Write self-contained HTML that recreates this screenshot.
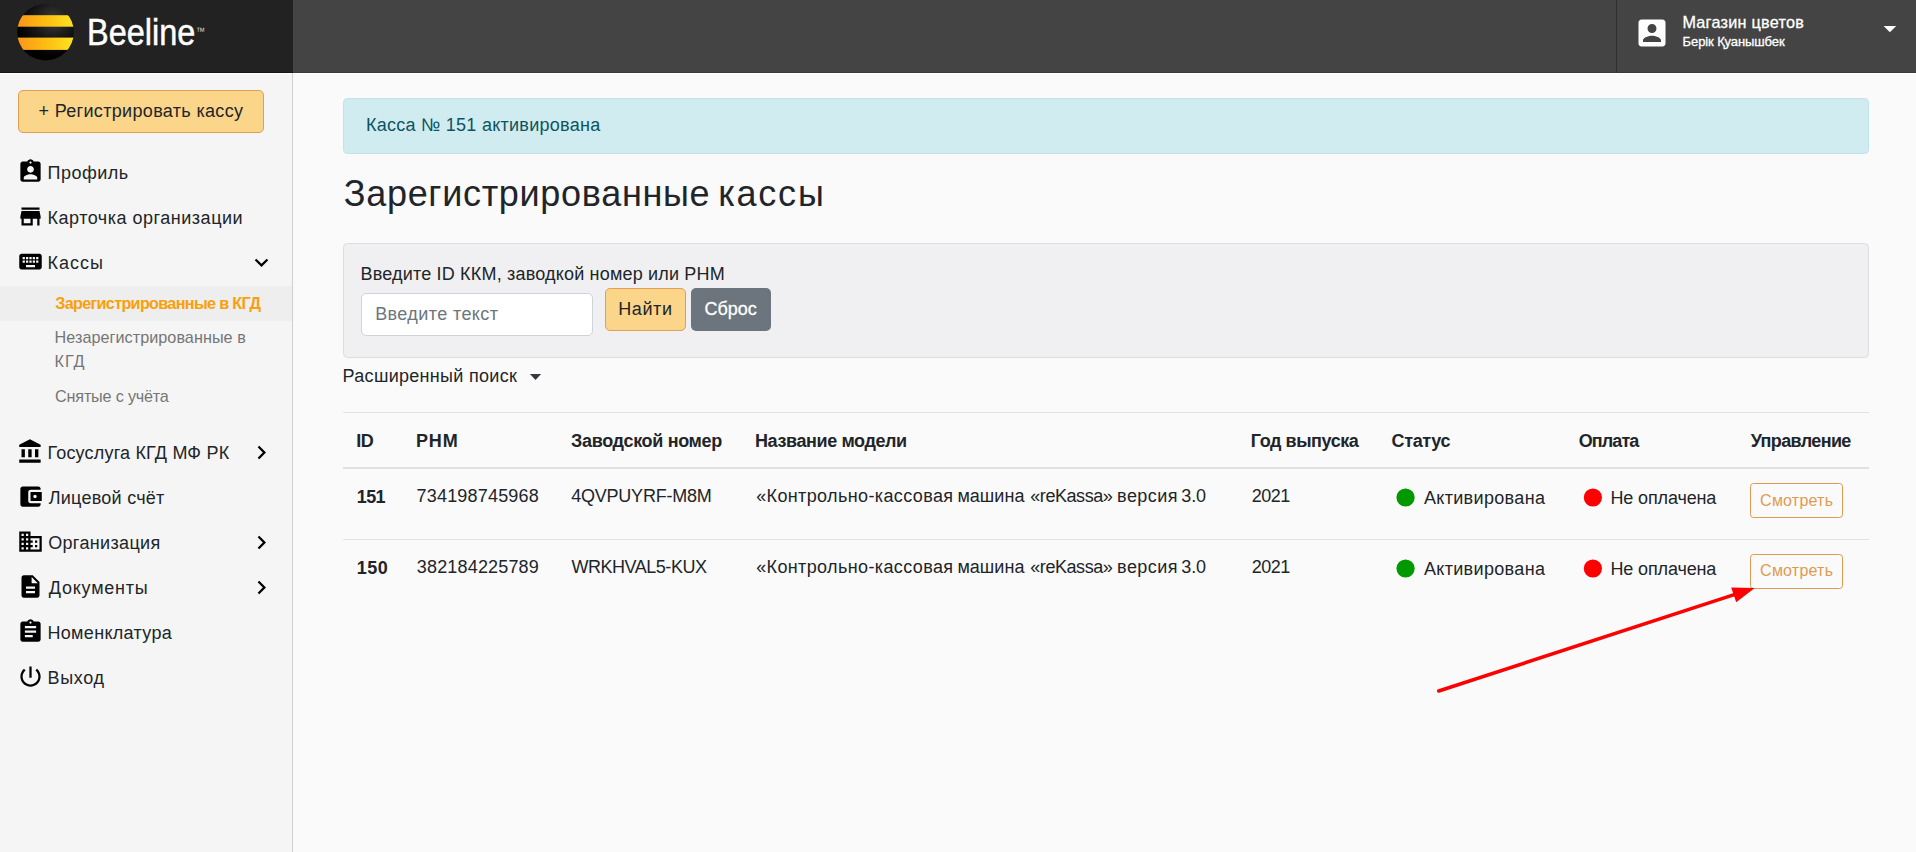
<!DOCTYPE html>
<html lang="ru">
<head>
<meta charset="utf-8">
<title>Зарегистрированные кассы</title>
<style>
html,body{margin:0;padding:0}
body{width:1916px;height:852px;overflow:hidden;position:relative;background:#fafafa;font-family:"Liberation Sans",sans-serif;color:#212529}
header,aside,main,nav,section,ul,li,form,h1,.tbl,.tr{position:absolute;left:0;top:0;margin:0;padding:0;list-style:none;display:block}
.b{position:absolute;box-sizing:border-box}
.t{position:absolute;margin:0;padding:0;line-height:1;font-weight:400;white-space:pre;display:block;text-decoration:none;color:#212529}
svg{position:absolute;overflow:visible}
.ic{width:27px;height:27px;left:17px;fill:#000}
.ch{width:27px;height:27px;left:248px;fill:#000}
.btn-y{background:#fad58a;border:1px solid #e39d54;border-radius:5px}
.btn-o{border:1px solid #df9a52;border-radius:3.5px;left:1750px;width:93px}
.hl{background:#dee2e6;left:343px;width:1526px;height:1px}
</style>
</head>
<body>

<header>
  <div class="b" style="left:0;top:0;width:1916px;height:73px;background:#444444;border-bottom:1px solid #3a3a3a"></div>
  <div class="b" style="left:0;top:0;width:293px;height:73px;background:#222222;border-bottom:1px solid #161616"></div>
  <svg style="left:16px;top:3px;width:60px;height:60px" viewBox="16 3 60 60">
    <defs>
      <clipPath id="lc"><circle cx="45.5" cy="32.2" r="28.3"/></clipPath>
      <linearGradient id="ly" x1="0" y1="0" x2="1" y2="0">
        <stop offset="0" stop-color="#fb9419"/><stop offset="0.5" stop-color="#fdbd12"/><stop offset="1" stop-color="#ffe820"/>
      </linearGradient>
      <radialGradient id="lb" cx="0.62" cy="0.28" r="0.62">
        <stop offset="0" stop-color="#3c3c3c"/><stop offset="0.55" stop-color="#151515"/><stop offset="1" stop-color="#000"/>
      </radialGradient>
    </defs>
    <g clip-path="url(#lc)">
      <rect x="16" y="3" width="60" height="60" fill="url(#lb)"/>
      <rect x="16" y="15.2" width="60" height="11.5" fill="url(#ly)"/>
      <rect x="16" y="37.6" width="60" height="12.3" fill="url(#ly)"/>
    </g>
  </svg>
  <a class="t" style="left:86.63px;top:14px;font-size:37px;font-weight:400;color:#ffffff;transform:scaleX(0.8771);transform-origin:0 0;-webkit-text-stroke:.5px #fff">Beeline</a>
  <span class="t" style="left:196.4px;top:25.5px;font-size:11px;color:#d8d8d8;transform:scaleX(.82);transform-origin:0 0">™</span>
  <div class="b" style="left:1616px;top:0;width:1px;height:73px;background:#2f2f2f"></div>
  <svg style="left:1634px;top:14.6px;width:36px;height:36px;fill:#fff" viewBox="0 0 24 24"><path d="M3 5v14c0 1.1.89 2 2 2h14c1.1 0 2-.9 2-2V5c0-1.1-.9-2-2-2H5c-1.11 0-2 .9-2 2zm12 4c0 1.66-1.34 3-3 3s-3-1.34-3-3 1.34-3 3-3 3 1.34 3 3zm-9 8c0-2 4-3.1 6-3.1s6 1.1 6 3.1v1H6v-1z"/></svg>
  <span class="t" style="left:1682.42px;top:14px;font-size:16.2px;color:#ffffff;letter-spacing:0.274px;-webkit-text-stroke:.3px #fff">Магазин цветов</span>
  <span class="t" style="left:1682.62px;top:35px;font-size:13px;color:#ffffff;letter-spacing:-0.110px;-webkit-text-stroke:.3px #fff">Берік Қуанышбек</span>
  <svg style="left:1883px;top:25px;width:14px;height:8px;fill:#fff" viewBox="1883 25 14 8"><path d="M1883.6 25.9h12.6l-6.3 6.4z"/></svg>
</header>

<aside>
  <div class="b" style="left:0;top:73px;width:1916px;height:1px;background:#ffffff"></div>
  <div class="b" style="left:0;top:74px;width:293px;height:778px;background:#f5f5f5"></div>
  <div class="b" style="left:292px;top:73px;width:1px;height:779px;background:#cfcfcf"></div>
  <div class="b btn-y" style="left:18px;top:90px;width:246px;height:43px"></div>
  <a class="t" style="left:38.57px;top:102px;font-size:18px;letter-spacing:0.325px">+ Регистрировать кассу</a>
  <nav>
    <svg class="ic" style="top:158.2px" viewBox="0 0 24 24"><path d="M19 3h-4.180C14.400 1.840 13.300 1 12 1c-1.300 0-2.400.840-2.820 2H5c-1.100 0-2 .900-2 2v14c0 1.100.900 2 2 2h14c1.100 0 2-.900 2-2V5c0-1.100-.900-2-2-2zm-7 0c.550 0 1 .450 1 1s-.450 1-1 1-1-.450-1-1 .450-1 1-1zm0 4c1.660 0 3 1.340 3 3s-1.340 3-3 3-3-1.340-3-3 1.340-3 3-3zm6 12H6v-1.400c0-2 4-3.100 6-3.100s6 1.100 6 3.100V19z"/></svg>
    <a class="t" style="left:47.50px;top:164px;font-size:18px;letter-spacing:0.493px">Профиль</a>
    <svg class="ic" style="top:202.8px" viewBox="0 0 24 24"><path d="M20 4H4v2h16V4zm1 10v-2l-1-5H4l-1 5v2h1v6h10v-6h4v6h2v-6h1zm-9 4H6v-4h6v4z"/></svg>
    <a class="t" style="left:47.49px;top:209px;font-size:18px;letter-spacing:0.515px">Карточка организации</a>
    <svg class="ic" style="top:247.6px" viewBox="0 0 24 24"><path d="M20 5H4c-1.100 0-1.990.900-1.990 2L2 17c0 1.100.900 2 2 2h16c1.100 0 2-.900 2-2V7c0-1.100-.900-2-2-2zm-9 3h2v2h-2V8zm0 3h2v2h-2v-2zM8 8h2v2H8V8zm0 3h2v2H8v-2zm-1 2H5v-2h2v2zm0-3H5V8h2v2zm9 7H8v-2h8v2zm0-4h-2v-2h2v2zm0-3h-2V8h2v2zm3 3h-2v-2h2v2zm0-3h-2V8h2v2z"/></svg>
    <a class="t" style="left:47.49px;top:254px;font-size:18px;letter-spacing:1.021px">Кассы</a>
    <svg class="ch" style="top:248.9px" viewBox="0 0 24 24"><path d="M16.59 8.59L12 13.17 7.41 8.59 6 10l6 6 6-6z"/></svg>
    <div class="b" style="left:0;top:286px;width:292px;height:35px;background:#eeeeee"></div>
    <a class="t" style="left:55.19px;top:295px;font-size:16.2px;font-weight:700;color:#f9a00c;letter-spacing:-0.679px">Зарегистрированные в КГД</a>
    <a class="t" style="left:54.52px;top:329px;font-size:16.2px;color:#757575;letter-spacing:0.044px">Незарегистрированные в</a>
    <a class="t" style="left:54.52px;top:353px;font-size:16.2px;color:#757575;letter-spacing:0.933px">КГД</a>
    <a class="t" style="left:55.09px;top:388px;font-size:16.2px;color:#757575;letter-spacing:-0.193px">Снятые с учёта</a>
    <svg class="ic" style="top:437.8px" viewBox="0 0 24 24"><path d="M4 10v7h3v-7H4zm6 0v7h3v-7h-3zM2 22h19v-3H2v3zm14-12v7h3v-7h-3zm-4.500-9L2 6v2h19V6l-9.500-5z"/></svg>
    <a class="t" style="left:47.49px;top:444px;font-size:18px;letter-spacing:0.189px">Госуслуга КГД МФ РК</a>
    <svg class="ch" style="top:439.2px" viewBox="0 0 24 24"><path d="M10 6L8.590 7.410 13.170 12l-4.580 4.590L10 18l6-6z"/></svg>
    <svg class="ic" style="top:482.8px" viewBox="0 0 24 24"><path d="M21 18v1c0 1.100-.900 2-2 2H5c-1.110 0-2-.900-2-2V5c0-1.100.890-2 2-2h14c1.100 0 2 .900 2 2v1h-9c-1.110 0-2 .900-2 2v8c0 1.100.890 2 2 2h9zm-9-2h10V8H12v8zm4-2.500c-.830 0-1.500-.670-1.500-1.500s.670-1.500 1.500-1.500 1.500.670 1.500 1.500-.670 1.500-1.500 1.500z"/></svg>
    <a class="t" style="left:48.75px;top:489px;font-size:18px;letter-spacing:0.249px">Лицевой счёт</a>
    <svg class="ic" style="top:527.6px" viewBox="0 0 24 24"><path d="M12 7V3H2v18h20V7H12zM6 19H4v-2h2v2zm0-4H4v-2h2v2zm0-4H4V9h2v2zm0-4H4V5h2v2zm4 12H8v-2h2v2zm0-4H8v-2h2v2zm0-4H8V9h2v2zm0-4H8V5h2v2zm10 12h-8v-2h2v-2h-2v-2h2v-2h-2V9h8v10zm-2-8h-2v2h2v-2zm0 4h-2v2h2v-2z"/></svg>
    <a class="t" style="left:48.17px;top:534px;font-size:18px;letter-spacing:0.347px">Организация</a>
    <svg class="ch" style="top:528.8px" viewBox="0 0 24 24"><path d="M10 6L8.590 7.410 13.170 12l-4.580 4.590L10 18l6-6z"/></svg>
    <svg class="ic" style="top:572.7px" viewBox="0 0 24 24"><path d="M14 2H6c-1.100 0-1.990.900-1.990 2L4 20c0 1.100.890 2 1.990 2H18c1.100 0 2-.900 2-2V8l-6-6zm2 16H8v-2h8v2zm0-4H8v-2h8v2zm-3-5V3.500L18.500 9H13z"/></svg>
    <a class="t" style="left:48.78px;top:579px;font-size:18px;letter-spacing:0.776px">Документы</a>
    <svg class="ch" style="top:573.8px" viewBox="0 0 24 24"><path d="M10 6L8.590 7.410 13.170 12l-4.580 4.590L10 18l6-6z"/></svg>
    <svg class="ic" style="top:617.9px" viewBox="0 0 24 24"><path d="M19 3h-4.180C14.400 1.840 13.300 1 12 1c-1.300 0-2.400.840-2.820 2H5c-1.100 0-2 .900-2 2v14c0 1.100.900 2 2 2h14c1.100 0 2-.900 2-2V5c0-1.100-.900-2-2-2zm-7 0c.550 0 1 .450 1 1s-.450 1-1 1-1-.450-1-1 .450-1 1-1zm2 14H7v-2h7v2zm3-4H7v-2h10v2zm0-4H7V7h10v2z"/></svg>
    <a class="t" style="left:47.49px;top:624px;font-size:18px;letter-spacing:0.314px">Номенклатура</a>
    <svg class="ic" style="top:662.5px" viewBox="0 0 24 24"><path d="M13 3h-2v10h2V3zm4.830 2.170l-1.420 1.420C17.990 7.860 19 9.810 19 12c0 3.870-3.130 7-7 7s-7-3.130-7-7c0-2.190 1.010-4.140 2.580-5.420L6.170 5.170C4.230 6.820 3 9.260 3 12c0 4.970 4.030 9 9 9s9-4.030 9-9c0-2.740-1.230-5.180-3.170-6.830z"/></svg>
    <a class="t" style="left:47.49px;top:669px;font-size:18px;letter-spacing:0.693px">Выход</a>
  </nav>
</aside>

<main>
  <div class="b" style="left:343px;top:98px;width:1526px;height:56px;background:#d1ecf1;border:1px solid #bee5eb;border-radius:4.5px"></div>
  <div class="t" style="left:365.89px;top:116px;font-size:18px;color:#0c5460;letter-spacing:0.265px">Касса № 151 активирована</div>
  <h1><span class="t" style="left:343.80px;top:176px;font-size:36px;letter-spacing:0.689px">Зарегистрированные </span><span class="t" style="left:718.13px;top:176px;font-size:36px;letter-spacing:1.802px">кассы</span></h1>
  <form>
    <div class="b" style="left:343px;top:243px;width:1526px;height:115px;background:#f0f0f2;border:1px solid #dddde0;border-radius:4.5px"></div>
    <label class="t" style="left:360.49px;top:265px;font-size:18px;letter-spacing:0.185px">Введите ID ККМ, заводкой номер или РНМ</label>
    <div class="b" style="left:361px;top:293px;width:232px;height:43px;background:#fff;border:1px solid #ced4da;border-radius:5px"></div>
    <span class="t" style="left:375.19px;top:305px;font-size:18px;color:#6c757d;letter-spacing:0.396px">Введите текст</span>
    <div class="b btn-y" style="left:605px;top:288px;width:81px;height:43px"></div>
    <span class="t" style="left:618.29px;top:300px;font-size:18px;letter-spacing:0.573px">Найти</span>
    <div class="b" style="left:691px;top:288px;width:80px;height:43px;background:#6c757d;border-radius:5px"></div>
    <span class="t" style="left:704.49px;top:300px;font-size:18px;color:#ffffff;letter-spacing:-0.046px;-webkit-text-stroke:.3px #fff">Сброс</span>
  </form>
  <a class="t" style="left:342.59px;top:367px;font-size:18px;letter-spacing:0.299px">Расширенный поиск</a>
  <svg style="left:530px;top:373px;width:12px;height:8px;fill:#343a40" viewBox="530 373 12 8"><path d="M529.9 373.9h11.2l-5.6 6.1z"/></svg>

  <div class="tbl">
    <div class="b hl" style="top:412px"></div>
    <div class="tr">
      <b class="t" style="left:356.31px;top:432px;font-size:18px;font-weight:700;letter-spacing:-0.547px">ID</b><b class="t" style="left:415.91px;top:432px;font-size:18px;font-weight:700;letter-spacing:0.887px">РНМ</b><b class="t" style="left:571.07px;top:432px;font-size:18px;font-weight:700;letter-spacing:-0.334px">Заводской номер</b><b class="t" style="left:755.01px;top:432px;font-size:18px;font-weight:700;letter-spacing:-0.397px">Название модели</b><b class="t" style="left:1250.81px;top:432px;font-size:18px;font-weight:700;letter-spacing:-0.439px">Год выпуска</b><b class="t" style="left:1391.55px;top:432px;font-size:18px;font-weight:700;letter-spacing:-0.348px">Статус</b><b class="t" style="left:1578.75px;top:432px;font-size:18px;font-weight:700;letter-spacing:-0.905px">Оплата</b><b class="t" style="left:1750.72px;top:432px;font-size:18px;font-weight:700;letter-spacing:-0.640px">Управление</b>
    </div>
    <div class="b hl" style="top:467px;height:2px"></div>
    <div class="tr">
      <b class="t" style="left:356.78px;top:488px;font-size:18px;font-weight:700;letter-spacing:-0.644px">151</b><span class="t" style="left:416.61px;top:487px;font-size:18px;letter-spacing:0.179px">734198745968</span><span class="t" style="left:571.25px;top:487px;font-size:18px;letter-spacing:-0.233px">4QVPUYRF-M8M</span><span><span class="t" style="left:756.15px;top:487px;font-size:18px;letter-spacing:0.377px">«Контрольно-кассовая </span><span class="t" style="left:957.38px;top:487px;font-size:18px;letter-spacing:0.054px">машина </span><span class="t" style="left:1030.25px;top:487px;font-size:18px;letter-spacing:-0.439px">«reKassa» </span><span class="t" style="left:1117.08px;top:487px;font-size:18px;letter-spacing:0.438px">версия </span><span class="t" style="left:1181.37px;top:487px;font-size:18px;letter-spacing:-0.182px">3.0</span></span><span class="t" style="left:1251.77px;top:487px;font-size:18px;letter-spacing:-0.475px">2021</span>
      <span class="t" style="left:1423.88px;top:489px;font-size:18px;letter-spacing:0.336px">Активирована</span>
      <span class="t" style="left:1610.39px;top:489px;font-size:18px;letter-spacing:-0.122px">Не оплачена</span>
      <div class="b btn-o" style="top:483px;height:35px"></div><a class="t" style="left:1760.11px;top:493px;font-size:16px;color:#df9a52;letter-spacing:0.214px">Смотреть</a>
    </div>
    <div class="b hl" style="top:539px"></div>
    <div class="tr">
      <b class="t" style="left:356.78px;top:559px;font-size:18px;font-weight:700;letter-spacing:0.479px">150</b><span class="t" style="left:416.87px;top:558px;font-size:18px;letter-spacing:0.161px">382184225789</span><span class="t" style="left:571.41px;top:558px;font-size:18px;letter-spacing:-0.466px">WRKHVAL5-KUX</span><span><span class="t" style="left:756.15px;top:558px;font-size:18px;letter-spacing:0.377px">«Контрольно-кассовая </span><span class="t" style="left:957.38px;top:558px;font-size:18px;letter-spacing:0.054px">машина </span><span class="t" style="left:1030.25px;top:558px;font-size:18px;letter-spacing:-0.439px">«reKassa» </span><span class="t" style="left:1117.08px;top:558px;font-size:18px;letter-spacing:0.438px">версия </span><span class="t" style="left:1181.37px;top:558px;font-size:18px;letter-spacing:-0.182px">3.0</span></span><span class="t" style="left:1251.77px;top:558px;font-size:18px;letter-spacing:-0.475px">2021</span>
      <span class="t" style="left:1423.88px;top:560px;font-size:18px;letter-spacing:0.336px">Активирована</span>
      <span class="t" style="left:1610.39px;top:560px;font-size:18px;letter-spacing:-0.122px">Не оплачена</span>
      <div class="b btn-o" style="top:554px;height:35px"></div><a class="t" style="left:1760.11px;top:563px;font-size:16px;color:#df9a52;letter-spacing:0.214px">Смотреть</a>
    </div>
  </div>

  <svg style="left:0;top:0;width:1916px;height:852px;pointer-events:none" viewBox="0 0 1916 852">
    <circle cx="1405.55" cy="497.5" r="9.1" fill="#009900"/>
    <circle cx="1592.9" cy="497.5" r="9.1" fill="#ff0000"/>
    <circle cx="1405.55" cy="568.5" r="9.1" fill="#009900"/>
    <circle cx="1592.9" cy="568.5" r="9.1" fill="#ff0000"/>
    <line x1="1438.7" y1="691" x2="1735" y2="594.4" stroke="#ff0000" stroke-width="3.5" stroke-linecap="round"/>
    <polygon points="1754.8,588 1731.2,587.6 1736.2,602.3" fill="#ff0000"/>
  </svg>
</main>

</body>
</html>
